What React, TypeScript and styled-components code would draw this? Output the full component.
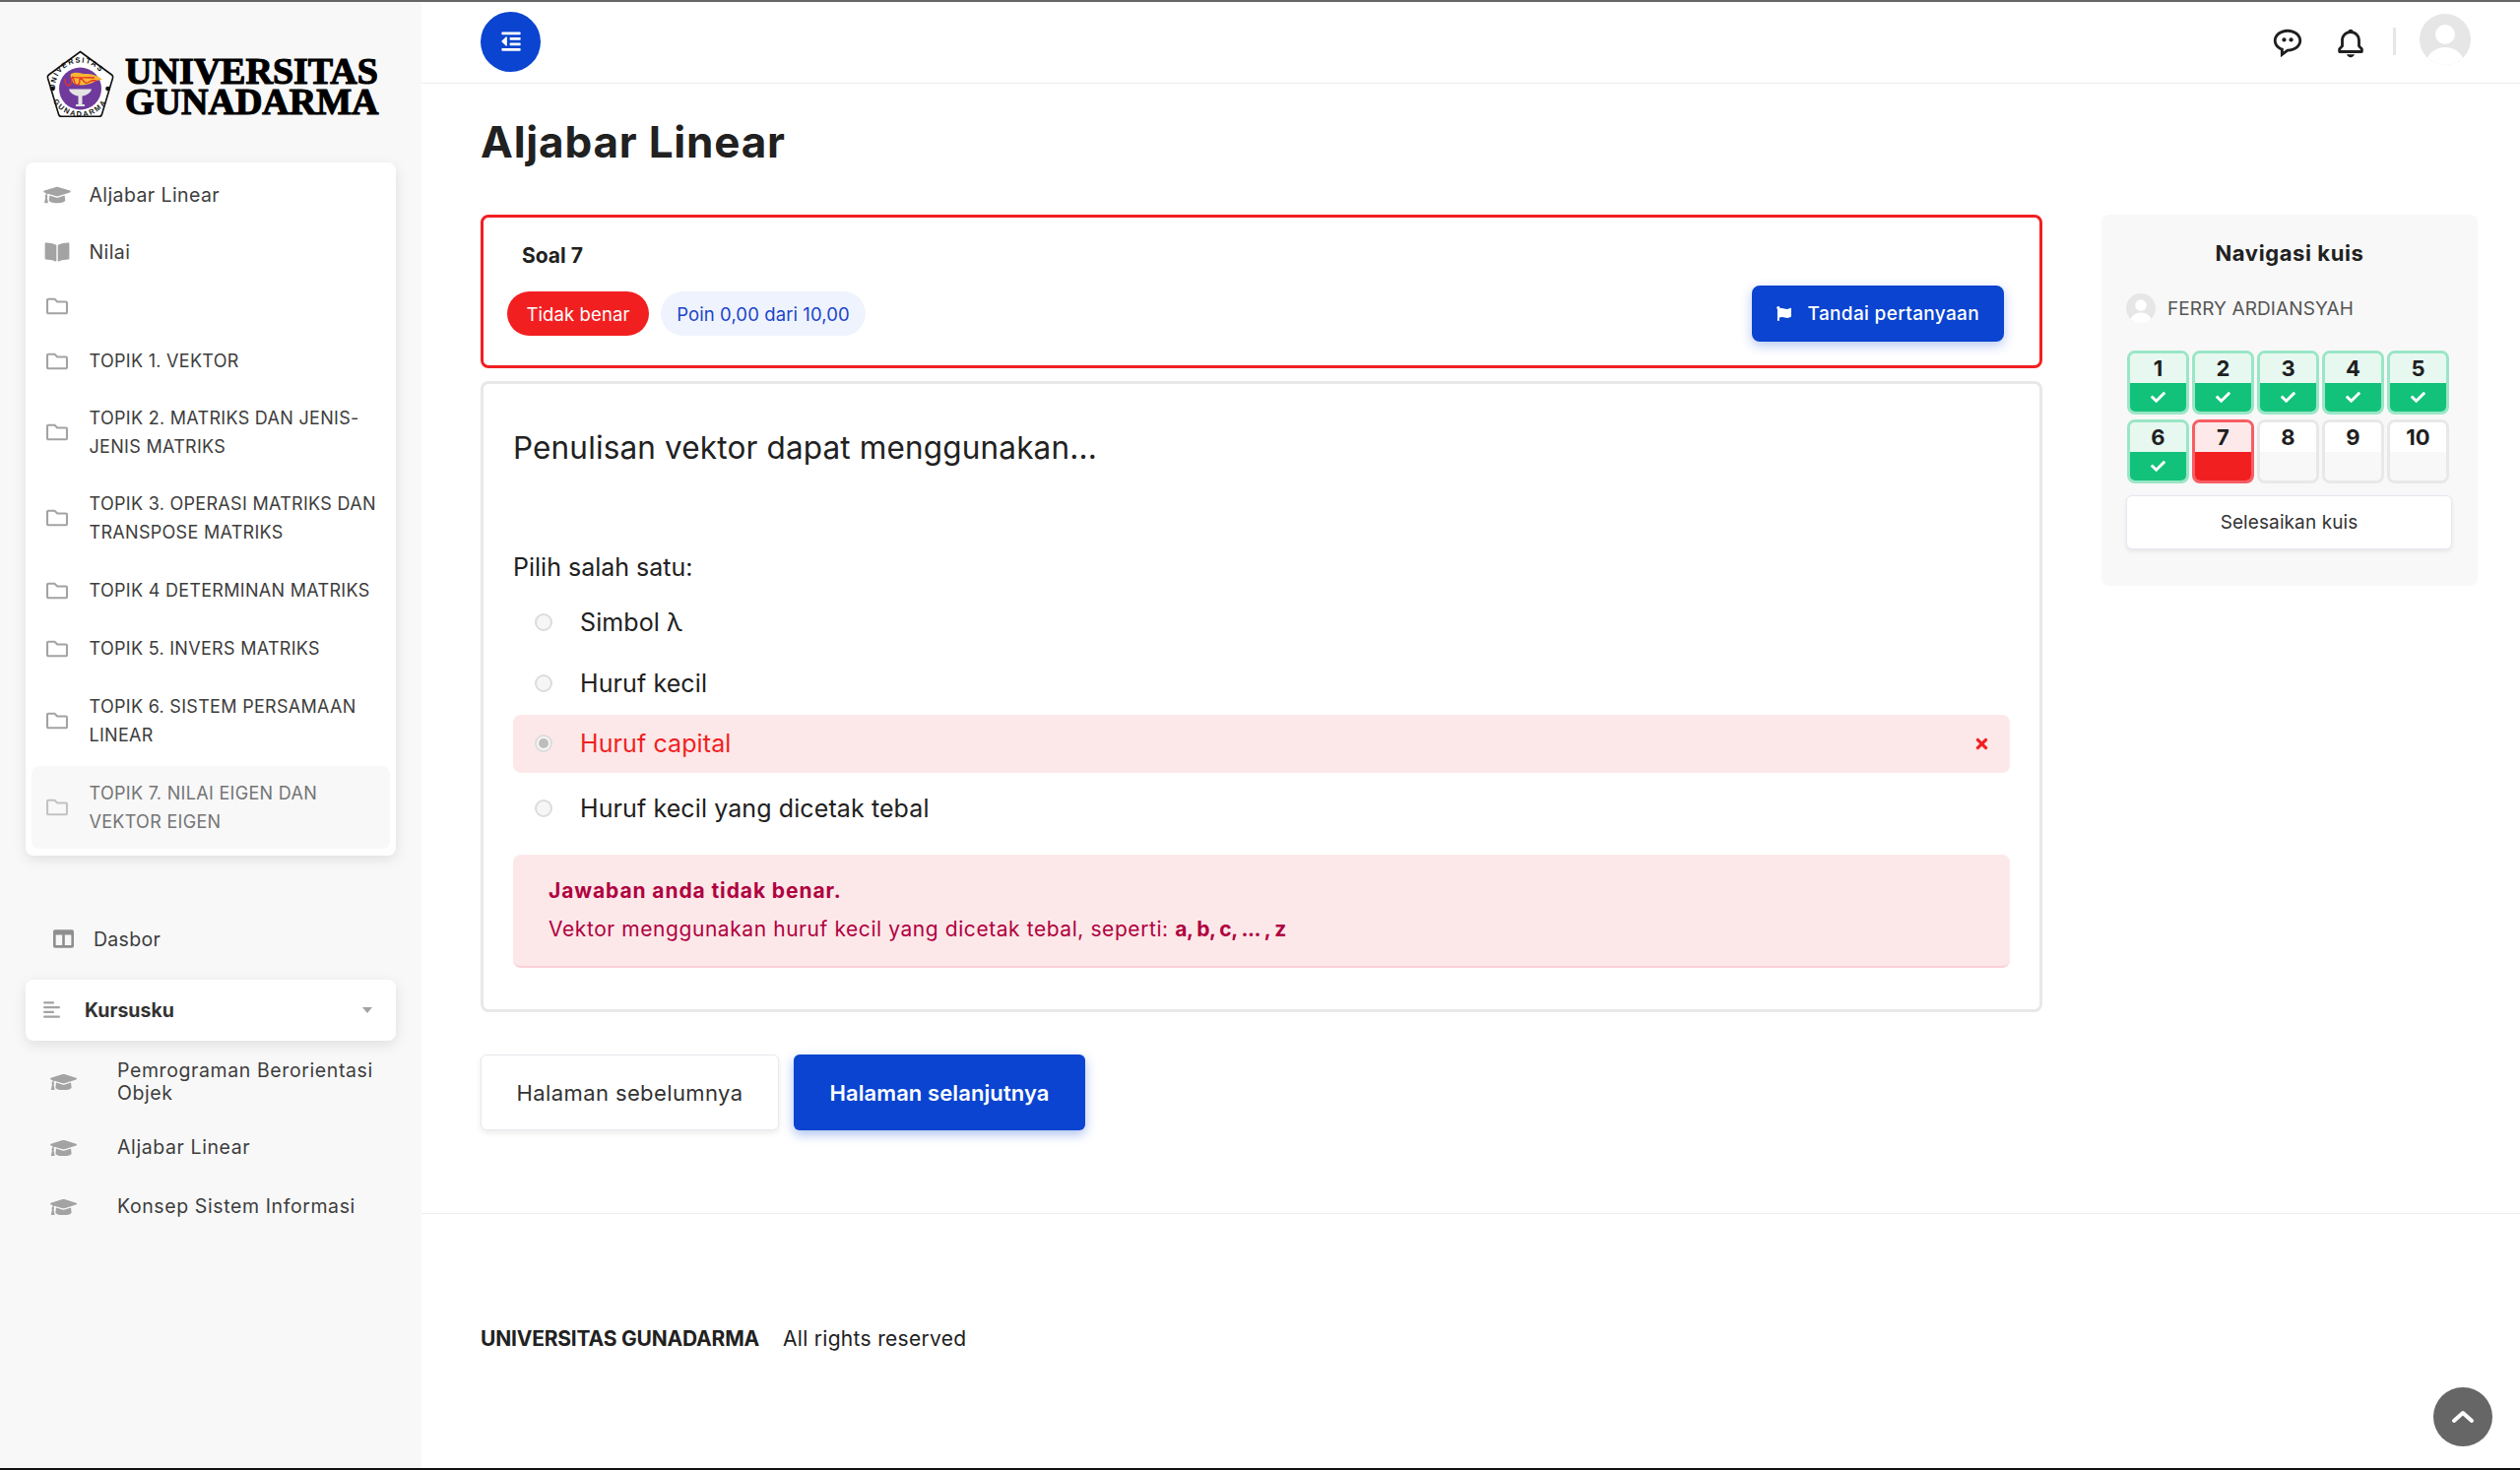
import React from "react";
import styled, { createGlobalStyle } from "styled-components";
import {
  FaAlignLeft,
  FaBookOpen,
  FaCheck,
  FaColumns,
  FaFlag,
  FaGraduationCap,
  FaOutdent,
  FaRegFolder,
  FaTimes,
} from "react-icons/fa";
import { BiBell, BiMessageRoundedDots } from "react-icons/bi";

const GlobalStyle = createGlobalStyle`
  html, body {
    margin: 0;
    padding: 0;
    background: #fff;
  }
  body {
    font-family: Inter, "Noto Sans", Arial, sans-serif;
    color: #212121;
  }
  * {
    box-sizing: border-box;
  }
`;

const Page = styled.div`
  display: flex;
  height: 1493px;
  overflow: hidden;
  border-top: 2px solid #666;
  border-bottom: 2px solid #111;
`;

const Sidebar = styled.aside`
  width: 428px;
  flex: none;
  background: #f8f8f8;
  padding: 0 26px;
`;

const Brand = styled.div`
  display: flex;
  align-items: center;
  height: 163px;
  padding: 6px 0 0 20px;
  gap: 9px;
`;

const BrandText = styled.div`
  margin-top: 3px;
  font-family: "Liberation Serif", serif;
  font-weight: 700;
  font-size: 38px;
  line-height: 31px;
  color: #000;
  -webkit-text-stroke: 1.2px #000;
  white-space: nowrap;
`;

const SideCard = styled.nav`
  background: #fff;
  border-radius: 8px;
  padding: 4px 6px 7px;
  box-shadow: 0 4px 14px rgba(0, 0, 0, 0.1);
`;

const SideRow = styled.div<{ $active?: boolean; $h: number; $upper?: boolean }>`
  display: flex;
  align-items: center;
  gap: 18.5px;
  padding: 0 12px;
  height: ${(props) => props.$h}px;
  border-radius: 8px;
  font-size: ${(props) => (props.$upper ? "18px" : "19.5px")};
  line-height: 29px;
  letter-spacing: ${(props) => (props.$upper ? "0.3px" : "0.4px")};
  color: ${(props) => (props.$active ? "#757575" : "#3d3d3d")};
  background: ${(props) => (props.$active ? "#f8f8f8" : "transparent")};
  margin-top: ${(props) => (props.$active ? "2.5px" : "0")};
  svg {
    flex: none;
    width: 28px;
    height: 22px;
    color: ${(props) => (props.$active ? "#c2c2c2" : "#a3a3a3")};
  }
`;

const DashRow = styled.div`
  display: flex;
  align-items: center;
  gap: 20px;
  margin-top: 61px;
  padding-left: 28px;
  height: 48px;
  font-size: 19.5px;
  letter-spacing: 0.3px;
  color: #3d3d3d;
  svg {
    width: 21px;
    height: 21px;
    color: #8f8f8f;
  }
`;

const CoursesHead = styled.div`
  display: flex;
  align-items: center;
  height: 62px;
  margin: 17px 0 5px;
  padding: 0 24px 0 17px;
  background: #fff;
  border-radius: 8px;
  box-shadow: 0 4px 14px rgba(0, 0, 0, 0.1);
  font-size: 19.5px;
  font-weight: 700;
  color: #333;
  svg {
    width: 19px;
    height: 19px;
    color: #a3a3a3;
    margin-right: 24px;
  }
`;

const Caret = styled.span`
  margin-left: auto;
  border-left: 5px solid transparent;
  border-right: 5px solid transparent;
  border-top: 6px solid #a3a3a3;
`;

const CourseRow = styled.div<{ $tall?: number }>`
  display: flex;
  align-items: center;
  gap: 41px;
  padding-left: 25px;
  height: ${(props) => props.$tall ?? 60}px;
  font-size: 19.5px;
  line-height: 23px;
  letter-spacing: 0.6px;
  color: #3d3d3d;
  svg {
    flex: none;
    width: 27px;
    height: 22px;
    color: #a3a3a3;
  }
`;

const Main = styled.main`
  flex: 1;
  min-width: 0;
`;

const TopBar = styled.header`
  display: flex;
  align-items: center;
  height: 83px;
  padding: 0 50px 2px 60px;
  border-bottom: 1px solid #ececec;
`;

const MenuButton = styled.button`
  display: flex;
  align-items: center;
  justify-content: center;
  width: 61px;
  height: 61px;
  border: 0;
  border-radius: 50%;
  background: #0a44d0;
  color: #fff;
  svg {
    width: 22px;
    height: 22px;
  }
`;

const TopIcons = styled.div`
  margin-left: auto;
  display: flex;
  align-items: center;
  color: #1f1f1f;
  svg {
    width: 34px;
    height: 34px;
    margin-top: 3px;
  }
`;

const TopDivider = styled.span`
  width: 3px;
  height: 28px;
  margin: 0 24px 0 26px;
  background: #e6e6e6;
`;

const TopAvatar = styled.svg`
  && {
    width: 52px;
    height: 52px;
    margin-top: -4px;
  }
`;

const Title = styled.h1`
  margin: 0;
  padding: 26px 0 0 60px;
  height: 133px;
  font-size: 44px;
  line-height: 66px;
  font-weight: 700;
  letter-spacing: 0.8px;
  color: #212121;
`;

const Columns = styled.div`
  display: flex;
  align-items: flex-start;
  padding: 0 43px 0 60px;
  gap: 60px;
`;

const Quiz = styled.div`
  flex: 1;
  min-width: 0;
`;

const InfoCard = styled.section`
  height: 156px;
  border: 3px solid #f21f21;
  border-radius: 8px;
  padding: 24px 36px 0 24px;
`;

const QuestionNo = styled.div`
  padding-left: 15px;
  font-size: 21px;
  line-height: 30px;
  font-weight: 700;
`;

const InfoRow = styled.div`
  display: flex;
  align-items: center;
  gap: 12px;
  margin-top: 15px;
`;

const Pill = styled.span<{ $tone: "red" | "blue" }>`
  display: flex;
  align-items: center;
  justify-content: center;
  height: 45px;
  width: ${(props) => (props.$tone === "red" ? "144px" : "208px")};
  border-radius: 23px;
  font-size: 18.5px;
  letter-spacing: 0.1px;
  background: ${(props) => (props.$tone === "red" ? "#f21f21" : "#eff3fe")};
  color: ${(props) => (props.$tone === "red" ? "#fff" : "#1a45c8")};
`;

const FlagButton = styled.button`
  margin-left: auto;
  display: flex;
  align-items: center;
  gap: 17px;
  height: 57px;
  padding: 0 25px;
  border: 0;
  border-radius: 8px;
  background: #0a44d0;
  color: #fff;
  font: 500 19px Inter, sans-serif;
  letter-spacing: 0.35px;
  box-shadow: 0 4px 12px rgba(10, 68, 208, 0.3);
  svg {
    width: 15px;
    height: 15px;
  }
`;

const ContentCard = styled.section`
  height: 641px;
  margin-top: 13px;
  border: 3px solid #e8e8e8;
  border-radius: 8px;
  padding: 42.5px 30px 0;
`;

const QuestionText = styled.div`
  font-size: 31.5px;
  line-height: 44px;
  letter-spacing: 0.15px;
  color: #212121;
`;

const Prompt = styled.div`
  margin: 81px 0 8px;
  font-size: 25px;
  line-height: 36px;
`;

const Option = styled.div<{ $wrong?: boolean; $h: number }>`
  display: flex;
  align-items: center;
  height: ${(props) => props.$h}px;
  padding: 0 20px 0 22px;
  border-radius: 8px;
  font-size: 25px;
  letter-spacing: 0.1px;
  background: ${(props) => (props.$wrong ? "#fde8e9" : "transparent")};
  color: ${(props) => (props.$wrong ? "#f21f21" : "#212121")};
`;

const Radio = styled.span<{ $checked?: boolean }>`
  flex: none;
  width: 18px;
  height: 18px;
  margin-right: 28px;
  border-radius: 50%;
  border: 2px solid #dcdcdc;
  background: #f6f6f6;
  display: flex;
  align-items: center;
  justify-content: center;
  &::after {
    content: "";
    display: ${(props) => (props.$checked ? "block" : "none")};
    width: 10px;
    height: 10px;
    border-radius: 50%;
    background: #bdbdbd;
  }
`;

const WrongMark = styled.span`
  margin-left: auto;
  display: flex;
  svg {
    width: 17px;
    height: 17px;
    color: #f21f21;
  }
`;

const Feedback = styled.div`
  height: 115px;
  margin-top: 11px;
  padding: 17px 36px 0;
  border-radius: 8px;
  border-bottom: 2px solid #fbd0d5;
  background: #fde8e9;
  color: #b00040;
  font-size: 21px;
  line-height: 39px;
  letter-spacing: 0.57px;
`;

const FeedbackHead = styled.strong`
  font-weight: 700;
  letter-spacing: 0.9px;
`;

const FeedbackAnswer = styled.strong`
  font-weight: 700;
  letter-spacing: -0.5px;
`;

const PageButtons = styled.div`
  display: flex;
  gap: 15px;
  margin-top: 43px;
`;

const PageButton = styled.button<{ $primary?: boolean }>`
  height: 77px;
  width: ${(props) => (props.$primary ? "296px" : "303px")};
  border: ${(props) => (props.$primary ? "0" : "1px solid #e8e8f0")};
  border-radius: 6px;
  font: ${(props) => (props.$primary ? 600 : 400)} 22px Inter, sans-serif;
  letter-spacing: ${(props) => (props.$primary ? "0.1px" : "0.4px")};
  background: ${(props) => (props.$primary ? "#0a44d0" : "#fff")};
  color: ${(props) => (props.$primary ? "#fff" : "#333")};
  box-shadow: ${(props) =>
    props.$primary ? "0 4px 12px rgba(10, 68, 208, 0.35)" : "0 3px 6px rgba(0, 0, 0, 0.08)"};
`;

const QuizNav = styled.aside`
  flex: none;
  width: 382px;
  height: 377px;
  padding: 19px 25px 0;
  border-radius: 8px;
  background: #f8f8f8;
`;

const NavTitle = styled.div`
  text-align: center;
  font-size: 22px;
  font-weight: 700;
  letter-spacing: 0.6px;
  line-height: 40px;
`;

const NavUser = styled.div`
  display: flex;
  align-items: center;
  gap: 12px;
  margin-top: 21px;
  font-size: 19px;
  letter-spacing: 0.1px;
  color: #555;
  svg {
    width: 30px;
    height: 30px;
  }
`;

const NavGrid = styled.div`
  display: grid;
  grid-template-columns: repeat(5, 63px);
  column-gap: 3px;
  row-gap: 5px;
  margin: 28px 0 0 1px;
`;

const NavCell = styled.div<{ $state: "ok" | "bad" | "none" }>`
  height: 65px;
  display: flex;
  flex-direction: column;
  border-radius: 8px;
  overflow: hidden;
  border: 3px solid
    ${(props) =>
      props.$state === "ok" ? "#9ae6c6" : props.$state === "bad" ? "#f75d64" : "#e8e8e8"};
`;

const NavNumber = styled.div<{ $state: "ok" | "bad" | "none" }>`
  height: 30px;
  text-align: center;
  font-size: 22px;
  line-height: 31px;
  font-weight: 700;
  color: #1f1f1f;
  background: ${(props) =>
    props.$state === "ok" ? "#e7f8f1" : props.$state === "bad" ? "#fee9ea" : "#fff"};
`;

const NavMark = styled.div<{ $state: "ok" | "bad" | "none" }>`
  flex: 1;
  display: flex;
  align-items: center;
  justify-content: center;
  color: #fff;
  background: ${(props) =>
    props.$state === "ok" ? "#13c27a" : props.$state === "bad" ? "#f21f21" : "#f8f8f8"};
  svg {
    width: 15px;
    height: 15px;
  }
`;

const FinishButton = styled.button`
  display: block;
  width: 331px;
  height: 55px;
  margin-top: 12px;
  background: #fff;
  border: 1px solid #e4e8f0;
  border-radius: 6px;
  font: 400 19px Inter, sans-serif;
  letter-spacing: 0.1px;
  color: #333;
  box-shadow: 0 2px 4px rgba(0, 0, 0, 0.08);
`;

const Footer = styled.footer`
  display: flex;
  align-items: center;
  gap: 24px;
  margin-top: 84px;
  padding: 0 60px;
  height: 254px;
  border-top: 1px solid #ececec;
  font-size: 21px;
  letter-spacing: 0.3px;
  strong {
    font-weight: 700;
    letter-spacing: -0.2px;
  }
`;

const ScrollTop = styled.button`
  position: fixed;
  left: 2471px;
  top: 1409px;
  display: flex;
  align-items: center;
  justify-content: center;
  width: 60px;
  height: 60px;
  border: 0;
  border-radius: 50%;
  background: #666;
  svg {
    width: 24px;
    height: 14px;
  }
`;

function Seal() {
  return (
    <svg width="72" height="72" viewBox="0 0 72 72" style={{ flex: "none" }}>
      <defs>
        <path id="sealTop" d="M10.500 43a25.500 25.500 0 1 1 50 0" />
        <path id="sealBottom" d="M4 41a32 32 0 0 0 63 0" />
      </defs>
      <path
        d="M35.500 1.500 67.500 25a3 3 0 0 1 1 3.300L57.500 65a3 3 0 0 1-3 2.300L16.500 67.300a3 3 0 0 1-3-2.300L2.500 28.300A3 3 0 0 1 3.500 25Z"
        fill="#fff"
        stroke="#111"
        strokeWidth="1.600"
      />
      <text fontSize="7.500" fontFamily="Liberation Sans, sans-serif" fontWeight="700" letterSpacing="1.500" fill="#111">
        <textPath href="#sealTop" startOffset="3%">UNIVERSITAS</textPath>
      </text>
      <text fontSize="7.500" fontFamily="Liberation Sans, sans-serif" fontWeight="700" letterSpacing="1.700" fill="#111">
        <textPath href="#sealBottom" startOffset="13%">GUNADARMA</textPath>
      </text>
      <circle cx="35.500" cy="39" r="21.500" fill="#6f3a9c" />
      <circle cx="7.500" cy="39" r="2.300" fill="#111" />
      <circle cx="63.500" cy="39" r="2.300" fill="#111" />
      <path d="M26 24c6-3 11 0 15 0 5 0 12 1 17 6-4 0-7 1-10 3-6 3-14 3-19 1-2-4-4-7-3-10Z" fill="#f7b733" />
      <path
        d="M20 29c0 6 3 9 6 5s-2-6 1-6 2 9 6 7 0-6 3-6 3 6 7 4 3-3 9-2M27 27c6 2 14 0 23 1"
        fill="none"
        stroke="#e8342a"
        strokeWidth="1.300"
      />
      <path d="M24 39.500h23c-1 4-5 6.500-9.500 7V55h2.500v2H31v-2h2.500v-8.500C29 46 25 43.500 24 39.500Z" fill="#e4e4e4" />
    </svg>
  );
}

function Avatar() {
  return (
    <svg viewBox="0 0 52 52">
      <circle cx="26" cy="26" r="26" fill="#e6e6e6" />
      <circle cx="26" cy="21" r="10" fill="#fff" />
      <path d="M8 45c3-7 10-11 18-11s15 4 18 11c-5 4-11 7-18 7s-13-3-18-7Z" fill="#fff" />
    </svg>
  );
}

const topics: { label: string; h: number; active?: boolean }[] = [
  { label: "", h: 52 },
  { label: "TOPIK 1. VEKTOR", h: 59 },
  { label: "TOPIK 2. MATRIKS DAN JENIS-JENIS MATRIKS", h: 85.5 },
  { label: "TOPIK 3. OPERASI MATRIKS DAN TRANSPOSE MATRIKS", h: 88.5 },
  { label: "TOPIK 4 DETERMINAN MATRIKS", h: 59 },
  { label: "TOPIK 5. INVERS MATRIKS", h: 59 },
  { label: "TOPIK 6. SISTEM PERSAMAAN LINEAR", h: 87 },
  { label: "TOPIK 7. NILAI EIGEN DAN VEKTOR EIGEN", h: 84, active: true },
];

const navStates: ("ok" | "bad" | "none")[] = [
  "ok", "ok", "ok", "ok", "ok", "ok", "bad", "none", "none", "none",
];

export default function App() {
  return (
    <Page>
      <GlobalStyle />
      <Sidebar>
        <Brand>
          <Seal />
          <BrandText>
            UNIVERSITAS
            <br />
            GUNADARMA
          </BrandText>
        </Brand>
        <SideCard>
          <SideRow $h={58}>
            <FaGraduationCap />
            Aljabar Linear
          </SideRow>
          <SideRow $h={58}>
            <FaBookOpen />
            Nilai
          </SideRow>
          {topics.map((t) => (
            <SideRow key={t.label} $h={t.h} $active={t.active} $upper>
              <FaRegFolder />
              <span>{t.label}</span>
            </SideRow>
          ))}
        </SideCard>
        <DashRow>
          <FaColumns />
          Dasbor
        </DashRow>
        <CoursesHead>
          <FaAlignLeft />
          Kursusku
          <Caret />
        </CoursesHead>
        <CourseRow $tall={74}>
          <FaGraduationCap />
          <span>Pemrograman Berorientasi Objek</span>
        </CourseRow>
        <CourseRow>
          <FaGraduationCap />
          <span>Aljabar Linear</span>
        </CourseRow>
        <CourseRow>
          <FaGraduationCap />
          <span>Konsep Sistem Informasi</span>
        </CourseRow>
      </Sidebar>
      <Main>
        <TopBar>
          <MenuButton aria-label="Menu">
            <FaOutdent />
          </MenuButton>
          <TopIcons>
            <BiMessageRoundedDots />
            <BiBell style={{ marginLeft: 30 }} />
            <TopDivider />
            <TopAvatar viewBox="0 0 52 52">
              <circle cx="26" cy="26" r="26" fill="#e6e6e6" />
              <circle cx="26" cy="21" r="10" fill="#fff" />
              <path d="M8 45c3-7 10-11 18-11s15 4 18 11c-5 4-11 7-18 7s-13-3-18-7Z" fill="#fff" />
            </TopAvatar>
          </TopIcons>
        </TopBar>
        <Title>Aljabar Linear</Title>
        <Columns>
          <Quiz>
            <InfoCard>
              <QuestionNo>Soal 7</QuestionNo>
              <InfoRow>
                <Pill $tone="red">Tidak benar</Pill>
                <Pill $tone="blue">Poin 0,00 dari 10,00</Pill>
                <FlagButton>
                  <FaFlag />
                  Tandai pertanyaan
                </FlagButton>
              </InfoRow>
            </InfoCard>
            <ContentCard>
              <QuestionText>Penulisan vektor dapat menggunakan...</QuestionText>
              <Prompt>Pilih salah satu:</Prompt>
              <Option $h={60}>
                <Radio />
                Simbol λ
              </Option>
              <Option $h={64}>
                <Radio />
                Huruf kecil
              </Option>
              <Option $h={59} $wrong>
                <Radio $checked />
                Huruf capital
                <WrongMark>
                  <FaTimes />
                </WrongMark>
              </Option>
              <Option $h={72}>
                <Radio />
                Huruf kecil yang dicetak tebal
              </Option>
              <Feedback>
                <FeedbackHead>Jawaban anda tidak benar.</FeedbackHead>
                <br />
                Vektor menggunakan huruf kecil yang dicetak tebal, seperti:{" "}
                <FeedbackAnswer>a, b, c, ... , z</FeedbackAnswer>
              </Feedback>
            </ContentCard>
            <PageButtons>
              <PageButton>Halaman sebelumnya</PageButton>
              <PageButton $primary>Halaman selanjutnya</PageButton>
            </PageButtons>
          </Quiz>
          <QuizNav>
            <NavTitle>Navigasi kuis</NavTitle>
            <NavUser>
              <Avatar />
              FERRY ARDIANSYAH
            </NavUser>
            <NavGrid>
              {navStates.map((state, i) => (
                <NavCell key={i} $state={state}>
                  <NavNumber $state={state}>{i + 1}</NavNumber>
                  <NavMark $state={state}>{state === "ok" && <FaCheck />}</NavMark>
                </NavCell>
              ))}
            </NavGrid>
            <FinishButton>Selesaikan kuis</FinishButton>
          </QuizNav>
        </Columns>
        <Footer>
          <strong>UNIVERSITAS GUNADARMA</strong>
          <span>All rights reserved</span>
        </Footer>
      </Main>
      <ScrollTop aria-label="Ke atas">
        <svg viewBox="0 0 24 14" fill="none" stroke="#fff" strokeWidth="4" strokeLinecap="round" strokeLinejoin="round">
          <path d="M3 11 12 3l9 8" />
        </svg>
      </ScrollTop>
    </Page>
  );
}
